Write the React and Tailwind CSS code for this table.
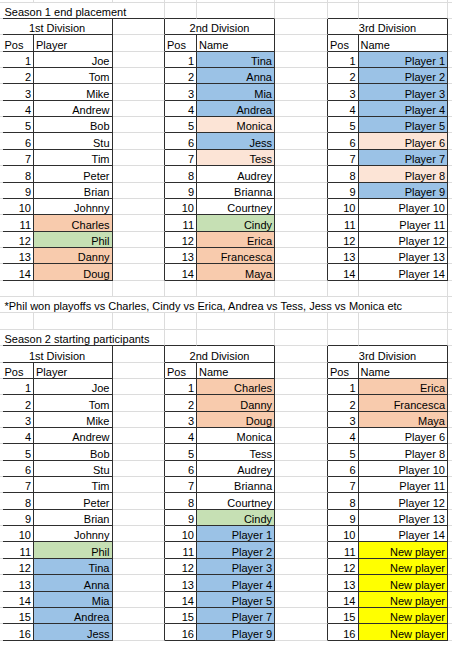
const BLUE = 'bg-[#9bc2e6]';
const ORANGE = 'bg-[#f8cbad]';
const PEACH = 'bg-[#fce4d6]';
const GREEN = 'bg-[#c6e0b4]';
const YELLOW = 'bg-[#ffff00]';

// season tables: [header, subheader, rows of [name, fill]]
const season1 = [
  ['1st Division', 'Player', [
    ['Joe'], ['Tom'], ['Mike'], ['Andrew'], ['Bob'], ['Stu'], ['Tim'], ['Peter'], ['Brian'], ['Johnny'],
    ['Charles', ORANGE], ['Phil', GREEN], ['Danny', ORANGE], ['Doug', ORANGE],
  ]],
  ['2nd Division', 'Name', [
    ['Tina', BLUE], ['Anna', BLUE], ['Mia', BLUE], ['Andrea', BLUE], ['Monica', PEACH], ['Jess', BLUE], ['Tess', PEACH],
    ['Audrey'], ['Brianna'], ['Courtney'], ['Cindy', GREEN], ['Erica', ORANGE], ['Francesca', ORANGE], ['Maya', ORANGE],
  ]],
  ['3rd Division', 'Name', [
    ['Player 1', BLUE], ['Player 2', BLUE], ['Player 3', BLUE], ['Player 4', BLUE], ['Player 5', BLUE], ['Player 6', PEACH],
    ['Player 7', BLUE], ['Player 8', PEACH], ['Player 9', BLUE],
    ['Player 10'], ['Player 11'], ['Player 12'], ['Player 13'], ['Player 14'],
  ]],
];

const season2 = [
  ['1st Division', 'Player', [
    ['Joe'], ['Tom'], ['Mike'], ['Andrew'], ['Bob'], ['Stu'], ['Tim'], ['Peter'], ['Brian'], ['Johnny'],
    ['Phil', GREEN], ['Tina', BLUE], ['Anna', BLUE], ['Mia', BLUE], ['Andrea', BLUE], ['Jess', BLUE],
  ]],
  ['2nd Division', 'Name', [
    ['Charles', ORANGE], ['Danny', ORANGE], ['Doug', ORANGE], ['Monica'], ['Tess'], ['Audrey'], ['Brianna'], ['Courtney'],
    ['Cindy', GREEN], ['Player 1', BLUE], ['Player 2', BLUE], ['Player 3', BLUE], ['Player 4', BLUE], ['Player 5', BLUE],
    ['Player 7', BLUE], ['Player 9', BLUE],
  ]],
  ['3rd Division', 'Name', [
    ['Erica', ORANGE], ['Francesca', ORANGE], ['Maya', ORANGE], ['Player 6'], ['Player 8'], ['Player 10'], ['Player 11'],
    ['Player 12'], ['Player 13'], ['Player 14'],
    ['New player', YELLOW], ['New player', YELLOW], ['New player', YELLOW], ['New player', YELLOW], ['New player', YELLOW], ['New player', YELLOW],
  ]],
];

const TABLE_COLS = [1, 4, 7];
const LAST_ROW = 39;

// sheet rows where tables sit (header row .. last data row)
const inTable = (r, c) =>
  ((r >= 2 && r <= 17) || (r >= 22 && r <= 39)) && [1, 2, 4, 5, 7, 8].includes(c);

const blank = (c) => ({ c, span: 1 });

const buildRow = (r) => {
  if (r === 0 || r === 18 || r === 20) return Array.from({ length: 10 }, (_, c) => blank(c));
  if (r === 1 || r === 21) {
    const text = r === 1 ? 'Season 1 end placement' : 'Season 2 starting participants';
    return [blank(0), { c: 1, span: 3, text, align: 'left' }, ...[4, 5, 6, 7, 8, 9].map(blank)];
  }
  if (r === 19) {
    return [blank(0), { c: 1, span: 8, text: '*Phil won playoffs vs Charles, Cindy vs Erica, Andrea vs Tess, Jess vs Monica etc', align: 'left' }, blank(9)];
  }
  const season = r < 20 ? season1 : season2;
  const top = r < 20 ? 2 : 22;
  const cells = [blank(0), blank(3), blank(6), blank(9)];
  season.forEach(([header, sub, rows], i) => {
    const c0 = TABLE_COLS[i];
    if (r === top) {
      cells.push({ c: c0, span: 2, text: header, align: 'center' });
    } else if (r === top + 1) {
      cells.push({ c: c0, span: 1, text: 'Pos', align: 'left' });
      cells.push({ c: c0 + 1, span: 1, text: sub, align: 'left' });
    } else {
      const idx = r - top - 2;
      const [name, fill] = rows[idx];
      cells.push({ c: c0, span: 1, text: String(idx + 1), align: 'right' });
      cells.push({ c: c0 + 1, span: 1, text: name, align: 'right', bg: fill });
    }
  });
  return cells.sort((a, b) => a.c - b.c);
};

const alignClass = {
  left: 'justify-start',
  right: 'justify-end',
  center: 'justify-center',
};

const Cell = ({ r, cell }) => {
  const end = cell.c + cell.span - 1;
  const darkRight = cell.c !== 9 && (inTable(r, end) || inTable(r, end + 1));
  let darkBottom = false;
  for (let c = cell.c; c <= end; c++) {
    if (inTable(r, c) || inTable(r + 1, c)) darkBottom = true;
  }
  const spanClass = cell.span === 2 ? 'col-span-2' : cell.span === 3 ? 'col-span-3' : cell.span === 8 ? 'col-span-8' : '';
  return (
    <div
      className={[
        'flex items-end overflow-visible whitespace-nowrap px-[2px] border-b',
        cell.c === 9 ? '' : 'border-r',
        darkRight ? 'border-r-[#2e2e2e]' : 'border-r-[#dcdcdc]',
        darkBottom ? 'border-b-[#2e2e2e]' : 'border-b-[#dcdcdc]',
        alignClass[cell.align] || '',
        cell.bg || 'bg-white',
        spanClass,
      ].join(' ')}
    >
      {cell.text && <span className="leading-[12px]">{cell.text}</span>}
    </div>
  );
};

export default function App() {
  const rows = Array.from({ length: LAST_ROW + 1 }, (_, r) => r);
  return (
    <div className="w-[452px] h-[646px] overflow-hidden bg-white font-['Liberation_Sans',Arial,sans-serif] text-[11px] text-black">
      <div className="grid grid-cols-[2.5px_31.5px_78.5px_52.5px_32px_78px_53px_30.5px_89.5px_1fr] grid-rows-[2.6px_repeat(39,16.37px)_1fr]">
        {rows.map(r =>
          buildRow(r).map(cell => <Cell key={`${r}-${cell.c}`} r={r} cell={cell} />)
        )}
      </div>
    </div>
  );
}
